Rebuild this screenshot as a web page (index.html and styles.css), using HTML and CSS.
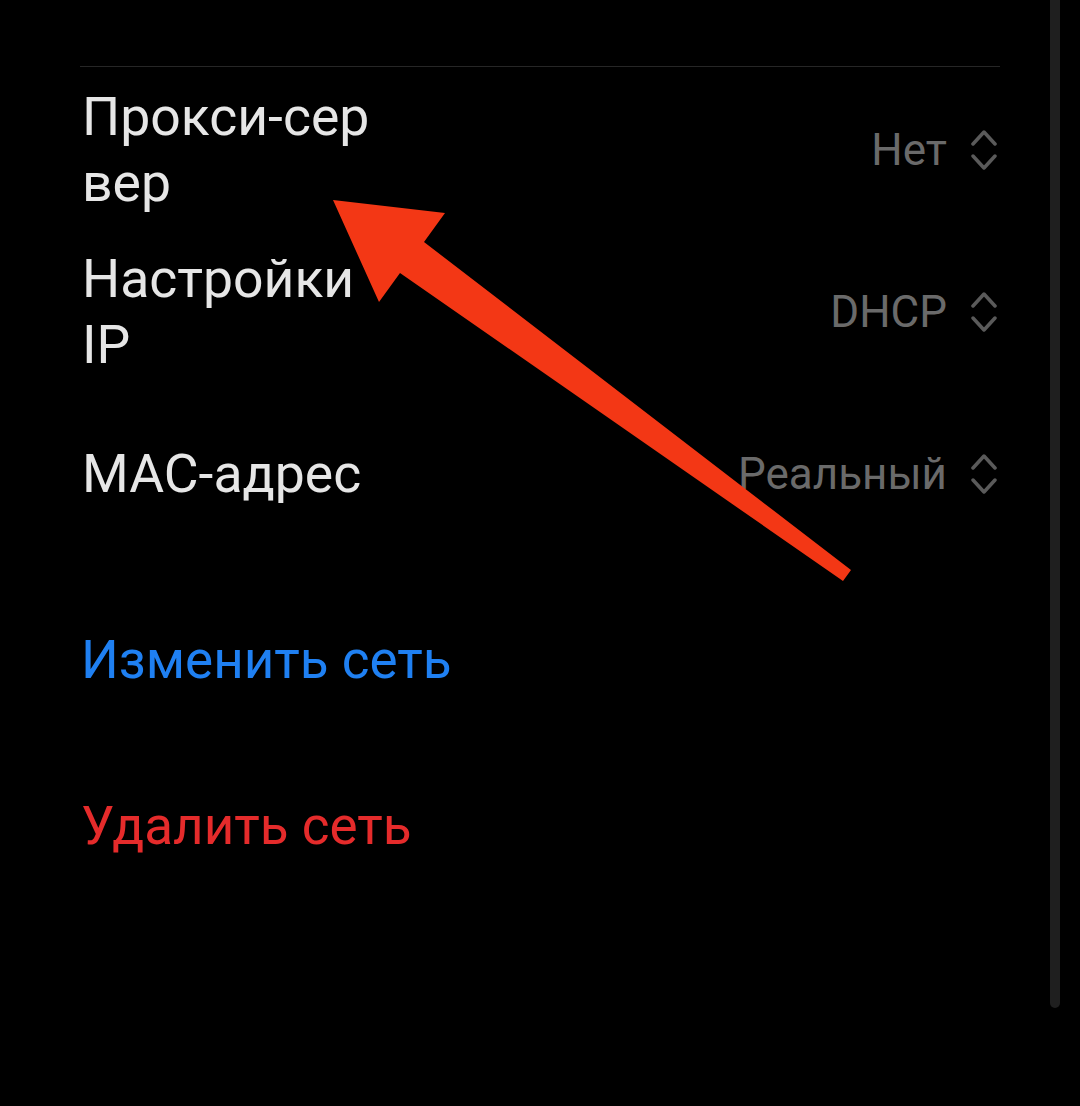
FILE: index.html
```html
<!DOCTYPE html>
<html lang="ru">
<head>
    <meta charset="UTF-8">
    <meta name="viewport" content="width=device-width, initial-scale=1.0">
    <title>Настройки сети</title>
    <link rel="stylesheet" href="styles.css">
</head>
<body>
    <div class="screen">
        <div class="settings">
            <div class="row">
                <div class="label label-long">Прокси-сервер</div>
                <div class="value">
                    <span>Нет</span>
                    <svg class="updown" viewBox="0 0 26 42"><polyline points="2,15 13,3 24,15"/><polyline points="2,27 13,39 24,27"/></svg>
                </div>
            </div>
            <div class="row">
                <div class="label">Настройки IP</div>
                <div class="value">
                    <span>DHCP</span>
                    <svg class="updown" viewBox="0 0 26 42"><polyline points="2,15 13,3 24,15"/><polyline points="2,27 13,39 24,27"/></svg>
                </div>
            </div>
            <div class="row">
                <div class="label">MAC-адрес</div>
                <div class="value">
                    <span>Реальный</span>
                    <svg class="updown" viewBox="0 0 26 42"><polyline points="2,15 13,3 24,15"/><polyline points="2,27 13,39 24,27"/></svg>
                </div>
            </div>

            <div class="action action-edit">Изменить сеть</div>
            <div class="action action-delete">Удалить сеть</div>
        </div>

        <!-- полоса прокрутки -->
        <div class="scrollbar"></div>

        <!-- стрелка-пометка поверх скриншота -->
        <svg class="pointer" viewBox="0 0 1080 1106">
            <polygon points="333,200 445,213 424,242 851,570 843,581 400,273 379,302"/>
        </svg>
    </div>
</body>
</html>
```

FILE: styles.css
```css
body {
    margin: 0;
    background-color: #000;
    font-family: Roboto, "Noto Sans", sans-serif;
}

.screen {
    position: relative;
    width: 1080px;
    height: 1106px;
    overflow: hidden;
    background-color: #000;
}

.settings {
    margin: 66px 80px 0 80px;
    border-top: 1px solid #262626;
}

.row {
    box-sizing: border-box;
    display: flex;
    align-items: center;
    justify-content: space-between;
    height: 162px;
    padding: 3px 3px 0 2px;
}

.label {
    width: 310px;
    font-size: 53.5px;
    line-height: 66px;
    color: #e6e6e6;
}

.label-long {
    word-break: break-all;
}

.value {
    display: flex;
    align-items: center;
    gap: 24px;
    font-size: 44px;
    color: #6a6a6a;
}

.updown {
    width: 26px;
    height: 42px;
    fill: none;
    stroke: #5a5a5a;
    stroke-width: 3.5;
    stroke-linecap: round;
    stroke-linejoin: round;
}

.action {
    display: flex;
    align-items: center;
    height: 166px;
    padding-left: 1px;
    font-size: 53px;
}

.action-edit {
    margin-top: 24px;
    color: #1f80f2;
}

.action-delete {
    color: #e52b2b;
}

.scrollbar {
    position: absolute;
    top: -10px;
    left: 1050px;
    width: 10px;
    height: 1018px;
    border-radius: 5px;
    background-color: #1f1f1f;
}

.pointer {
    position: absolute;
    top: 0;
    left: 0;
    width: 1080px;
    height: 1106px;
    pointer-events: none;
    fill: #f33715;
}
```
